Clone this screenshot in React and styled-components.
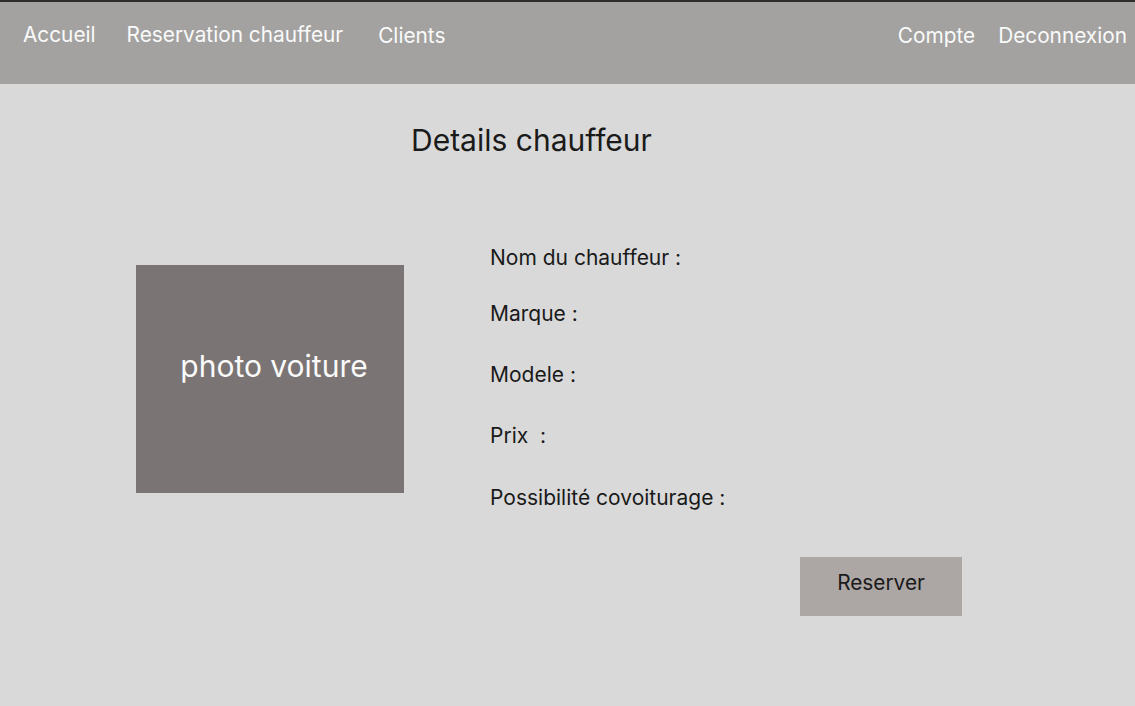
import { createGlobalStyle, styled } from 'styled-components';

const GlobalStyle = createGlobalStyle`
	html, body {
		margin: 0;
		padding: 0;
		background: #d9d9d9;
		font-family: Inter, "Noto Sans", sans-serif;
	}
`;

const links = [
	{ label: 'Accueil', gap: 31, top: 0 },
	{ label: 'Reservation chauffeur', gap: 35, top: 0 },
	{ label: 'Clients', gap: 0, top: 1 },
];

const fields = [
	{ label: 'Nom du chauffeur :', space: 32 },
	{ label: 'Marque :', space: 37 },
	{ label: 'Modele :', space: 37 },
	{ label: 'Prix  :', space: 38 },
	{ label: 'Possibilité covoiturage :', space: 0 },
];

const App = () => {
	return (
		<Page>
			<GlobalStyle />
			<Header>
				<Nav>
					{links.map((l) => (
						<NavLink key={l.label} $gap={l.gap} $top={l.top}>
							{l.label}
						</NavLink>
					))}
				</Nav>
				<Nav>
					<NavLink $gap={23} $top={1}>Compte</NavLink>
					<NavLink $gap={0} $top={1}>Deconnexion</NavLink>
				</Nav>
			</Header>
			<Main>
				<Title>Details chauffeur</Title>
				<Content>
					<Photo>photo voiture</Photo>
					<Details>
						{fields.map((f) => (
							<Field key={f.label} $space={f.space}>
								{f.label}
							</Field>
						))}
						<Button>Reserver</Button>
					</Details>
				</Content>
			</Main>
		</Page>
	);
};

const Page = styled.div`
	width: 100%;
	min-height: 706px;
	background: #d9d9d9;
`;
const Header = styled.header`
	height: 84px;
	border-top: 2px solid #2e2e2e;
	background: #a3a2a0;
	display: flex;
	justify-content: space-between;
	align-items: flex-start;
	padding: 21px 8px 0 23px;
	box-sizing: border-box;
`;
const Nav = styled.nav`
	display: flex;
	align-items: flex-start;
`;
const NavLink = styled.a`
	font-size: 20.8px;
	line-height: 24px;
	color: #fafafa;
	margin-right: ${(p) => p.$gap}px;
	margin-top: ${(p) => p.$top}px;
	white-space: pre;
`;
const Main = styled.main`
	padding-top: 38px;
`;
const Title = styled.h1`
	margin: 0 0 0 411px;
	font-size: 30px;
	line-height: 36px;
	font-weight: 400;
	color: #1a1a1a;
`;
const Content = styled.section`
	display: flex;
	align-items: flex-start;
	padding-left: 136px;
	margin-top: 87px;
	gap: 86px;
`;
const Photo = styled.div`
	width: 268px;
	height: 228px;
	margin-top: 20px;
	background: #7a7574;
	color: #fafafa;
	font-size: 30px;
	display: flex;
	align-items: center;
	justify-content: center;
	padding: 0 0 26px 8px;
	box-sizing: border-box;
`;
const Details = styled.div`
	display: flex;
	flex-direction: column;
	align-items: flex-start;
	padding-top: 1px;
`;
const Field = styled.p`
	margin: 0 0 ${(p) => p.$space}px;
	font-size: 21px;
	line-height: 24px;
	color: #1a1a1a;
	white-space: pre;
`;
const Button = styled.button`
	margin: 47px 0 0 310px;
	width: 162px;
	height: 59px;
	padding: 0 0 9px;
	border: none;
	background: #aca6a5;
	font-family: inherit;
	font-size: 20.8px;
	color: #1a1a1a;
`;

export default App;
